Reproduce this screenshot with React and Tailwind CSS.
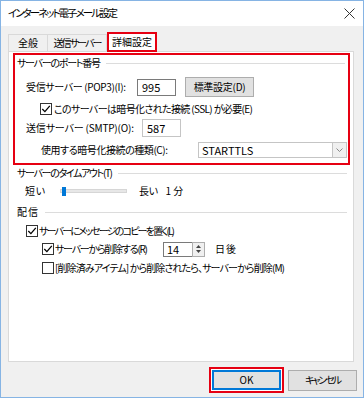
import React, { useLayoutEffect, useRef, useState } from 'react';

// Meiryo UI is narrower than Noto CJK, so squeeze each label to the width it has in the dialog
function Fit({ w, children, className = '' }) {
  const ref = useRef(null);
  const [ls, setLs] = useState(null);

  useLayoutEffect(() => {
    const measure = () => {
      const el = ref.current;
      if (!el) return;
      el.style.letterSpacing = '0px';
      const natural = el.getBoundingClientRect().width;
      const n = Math.max(el.textContent.length - 1, 1);
      const v = (w - natural) / n;
      el.style.letterSpacing = `${v}px`;
      setLs(v);
    };
    measure();
    if (document.fonts && document.fonts.ready) document.fonts.ready.then(measure);
  }, [w]);

  return (
    <span ref={ref} className={`inline-block ${className}`} style={ls !== null ? { letterSpacing: `${ls}px` } : undefined}>
      {children}
    </span>
  );
}

function Check({ checked }) {
  return (
    <span className="w-[12px] h-[12px] border border-[#333333] bg-white flex items-center justify-center shrink-0">
      {checked && (
        <svg width="10" height="10" viewBox="0 0 10 10">
          <path d="M1.3 5 L3.9 7.6 L8.8 1.8" fill="none" stroke="#000" strokeWidth="1.3" />
        </svg>
      )}
    </span>
  );
}

function GroupHeader({ label, w }) {
  return (
    <div className="h-[16px] flex items-center pl-[8px] mr-[6px]">
      <Fit w={w}>{label}</Fit>
      <span className="flex-1 h-px bg-[#dcdcdc] ml-[6px]" />
    </div>
  );
}

export default function App() {
  return (
    <div className="w-[364px] h-[398px] border border-[#86b4e4] bg-[#f0f0f0] flex flex-col text-[10px] leading-none whitespace-nowrap text-black font-['Noto_Sans_CJK_JP',sans-serif] [font-feature-settings:'palt']">
      <div className="h-[25px] bg-white flex items-center justify-between pl-[7px] pr-[8px] shrink-0">
        <Fit w={110} className="text-[10.5px]">インターネット電子メール設定</Fit>
        <svg width="11" height="11" viewBox="0 0 11 11">
          <path d="M0.5 0.5 L10.5 10.5 M10.5 0.5 L0.5 10.5" stroke="#333" strokeWidth="1" />
        </svg>
      </div>

      <div className="flex-1 flex flex-col pl-[7px]">
        <div className="h-[25px] flex items-end">
          <div className="w-[40px] h-[17px] border border-b-0 border-[#d9d9d9] flex items-center justify-center">
            <Fit w={20}>全般</Fit>
          </div>
          <div className="w-[59px] h-[17px] border border-b-0 border-l-0 border-[#d9d9d9] flex items-center justify-center">
            <Fit w={49}>送信サーバー</Fit>
          </div>
          <div className="w-[50px] h-[20px] border-2 border-[#e60012] bg-white flex items-center justify-center -mb-px relative">
            <Fit w={40}>詳細設定</Fit>
          </div>
        </div>

        <div className="w-[346px] h-[311px] bg-white border border-[#d9d9d9] flex flex-col">
          <div className="ml-[4px] mt-[1px] w-[337px] h-[112px] border-2 border-[#e60012] flex flex-col">
            <div className="h-[16px] flex items-center pl-[2px] mr-[3px]">
              <Fit w={84}>サーバーのポート番号</Fit>
              <span className="flex-1 h-px bg-[#dcdcdc] ml-[6px]" />
            </div>
            <div className="mt-[6px] h-[20px] flex items-center pl-[11px]">
              <span className="w-[111px]"><Fit w={100}>受信サーバー (POP3)(I):</Fit></span>
              <span className="w-[39px] h-[17px] border border-[#7a7a7a] flex items-center pl-[4px] text-[11px]">995</span>
              <span className="ml-[9px] w-[69px] h-[20px] bg-[#e1e1e1] border border-[#adadad] flex items-center justify-center">
                <Fit w={52}>標準設定(D)</Fit>
              </span>
            </div>
            <div className="mt-[4px] h-[16px] flex items-center pl-[25px]">
              <Check checked />
              <Fit w={199} className="ml-[2px]">このサーバーは暗号化された接続 (SSL) が必要(E)</Fit>
            </div>
            <div className="mt-[2px] h-[18px] flex items-center pl-[11px]">
              <span className="w-[116px]"><Fit w={108}>送信サーバー (SMTP)(O):</Fit></span>
              <span className="w-[39px] h-[18px] border border-[#c5c5c5] flex items-center pl-[4px] text-[11px]">587</span>
            </div>
            <div className="mt-[5px] h-[16px] flex items-center justify-between pl-[26px] pr-[1px]">
              <Fit w={127}>使用する暗号化接続の種類(C):</Fit>
              <span className="w-[149px] h-[16px] border border-[#c5c5c5] flex items-center">
                <span className="flex-1 pl-[3px] text-[11px]">STARTTLS</span>
                <span className="w-[14px] h-full bg-[#f0f0f0] border-l border-[#c5c5c5] flex items-center justify-center">
                  <svg width="7" height="4" viewBox="0 0 7 4">
                    <path d="M0.5 0.5 L3.5 3.5 L6.5 0.5" fill="none" stroke="#888" strokeWidth="1" />
                  </svg>
                </span>
              </span>
            </div>
          </div>

          <GroupHeader label="サーバーのタイムアウト(T)" w={96} />
          <div className="mt-[2px] h-[16px] flex items-center pl-[16px]">
            <span className="w-[35px]"><Fit w={20}>短い</Fit></span>
            <span className="w-[67px] h-[9px] flex items-center relative">
              <span className="w-full h-[4px] bg-[#e7e7e7] border border-[#d6d6d6]" />
              <span className="absolute left-[2px] top-0 w-[4px] h-[9px] bg-[#0078d7]" />
            </span>
            <Fit w={19} className="ml-[12px]">長い</Fit>
            <span className="ml-[8px]">1 分</span>
          </div>

          <div className="mt-[5px]">
            <GroupHeader label="配信" w={21} />
          </div>
          <div className="mt-[3px] h-[16px] flex items-center pl-[17px]">
            <Check checked />
            <Fit w={136} className="ml-[1px]">サーバーにメッセージのコピーを置く(L)</Fit>
          </div>
          <div className="mt-[2px] h-[16px] flex items-center pl-[33px]">
            <Check checked />
            <span className="ml-[1px] w-[108px]"><Fit w={93}>サーバーから削除する(R)</Fit></span>
            <span className="w-[29px] h-[15px] border border-[#7a7a7a] border-r-0 flex items-center pl-[3px] text-[11px]">14</span>
            <span className="w-[13px] h-[15px] border border-[#adadad] bg-[#f0f0f0] flex flex-col items-center justify-center gap-[2px]">
              <svg width="5" height="3" viewBox="0 0 5 3"><path d="M0 3 L2.5 0 L5 3Z" fill="#444" /></svg>
              <svg width="5" height="3" viewBox="0 0 5 3"><path d="M0 0 L2.5 3 L5 0Z" fill="#444" /></svg>
            </span>
            <Fit w={21} className="ml-[10px]">日後</Fit>
          </div>
          <div className="mt-[3px] h-[16px] flex items-center pl-[33px]">
            <Check />
            <Fit w={230} className="ml-[1px]">[削除済みアイテム] から削除されたら、サーバーから削除(M)</Fit>
          </div>
        </div>

        <div className="mt-[5px] flex items-center justify-end pr-[6px]">
          <div className="border-2 border-[#e60012] p-[1px] bg-white">
            <div className="w-[69px] h-[20px] border-2 border-[#0078d7] bg-[#e1e1e1] flex items-center justify-center">OK</div>
          </div>
          <div className="ml-[4px] w-[69px] h-[21px] border border-[#adadad] bg-[#e1e1e1] flex items-center justify-center">
            <Fit w={37}>キャンセル</Fit>
          </div>
        </div>
      </div>
    </div>
  );
}
